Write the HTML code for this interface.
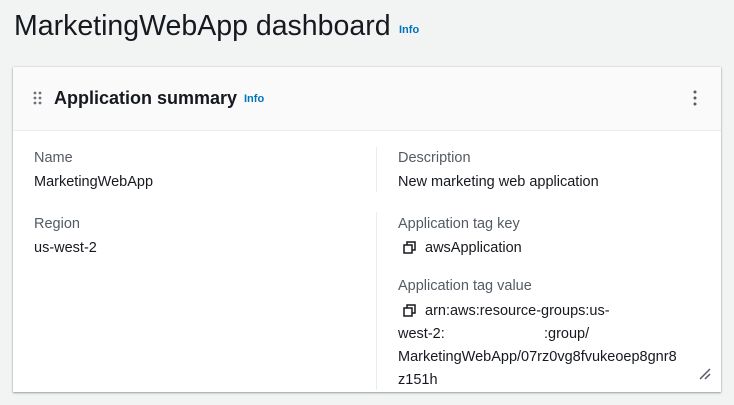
<!DOCTYPE html>
<html><head><style>
body{margin:0;width:734px;height:405px;background:#f2f3f3;font-family:"Liberation Sans",sans-serif;position:relative;overflow:hidden;color:#16191f}
.a{position:absolute;white-space:nowrap}
.info{color:#0073bb;font-weight:bold;font-size:12px}
.lbl{color:#545b64;font-size:14.5px}
.val{font-size:14.5px;color:#16191f}
</style></head><body>
<div class="a" style="left:14px;top:10px;font-size:28.5px;color:#16191f">MarketingWebApp dashboard</div>
<div class="a info" style="left:399px;top:24px;font-size:11px">Info</div>
<div class="a" style="left:13px;top:67px;width:708px;height:325px;background:#fff;box-shadow:0 1px 2px rgba(0,28,36,.35),0 0 1px rgba(0,28,36,.3)"></div>
<div class="a" style="left:13px;top:67px;width:708px;height:63px;background:#fafafa;border-bottom:1px solid #eaeded"></div>
<svg class="a" style="left:33px;top:91px" width="10" height="14"><g fill="#687078"><circle cx="2" cy="2" r="1.4"/><circle cx="7" cy="2" r="1.4"/><circle cx="2" cy="7" r="1.4"/><circle cx="7" cy="7" r="1.4"/><circle cx="2" cy="12" r="1.4"/><circle cx="7" cy="12" r="1.4"/></g></svg>
<div class="a" style="left:54px;top:88px;font-size:18px;font-weight:bold">Application summary</div>
<div class="a info" style="left:244px;top:93px;font-size:11px">Info</div>
<svg class="a" style="left:692px;top:90px" width="6" height="16"><g fill="#545b64"><circle cx="3" cy="2" r="1.5"/><circle cx="3" cy="8" r="1.5"/><circle cx="3" cy="14" r="1.5"/></g></svg>
<div class="a" style="left:376px;top:147px;width:1px;height:45px;background:#eaeded"></div>
<div class="a" style="left:376px;top:212px;width:1px;height:178px;background:#eaeded"></div>
<div class="a lbl" style="left:34px;top:150px">Name</div>
<div class="a val" style="left:34px;top:174px">MarketingWebApp</div>
<div class="a lbl" style="left:34px;top:216px">Region</div>
<div class="a val" style="left:34px;top:240px">us-west-2</div>
<div class="a lbl" style="left:398px;top:150px">Description</div>
<div class="a val" style="left:398px;top:174px">New marketing web application</div>
<div class="a lbl" style="left:398px;top:216px">Application tag key</div>
<svg class="a" style="left:403px;top:241px" width="13" height="13"><g fill="none" stroke="#16191f" stroke-width="1.5"><rect x="1" y="4" width="8" height="8"/><path d="M4 4V1h8v8H9"/></g></svg>
<div class="a val" style="left:425px;top:240px">awsApplication</div>
<div class="a lbl" style="left:398px;top:278px">Application tag value</div>
<svg class="a" style="left:403px;top:304px" width="13" height="13"><g fill="none" stroke="#16191f" stroke-width="1.5"><rect x="1" y="4" width="8" height="8"/><path d="M4 4V1h8v8H9"/></g></svg>
<div class="a val" style="left:425px;top:303px">arn:aws:resource-groups:us-</div>
<div class="a val" style="left:398px;top:326px">west-2:</div>
<div class="a val" style="left:544px;top:326px">:group/</div>
<div class="a val" style="left:398px;top:349px">MarketingWebApp/07rz0vg8fvukeoep8gnr8</div>
<div class="a val" style="left:398px;top:372px">z151h</div>
<svg class="a" style="left:699px;top:368px" width="12" height="12"><g stroke="#545b64" stroke-width="1.5"><path d="M1 11L11 1M6 11L11 6"/></g></svg>
</body></html>
